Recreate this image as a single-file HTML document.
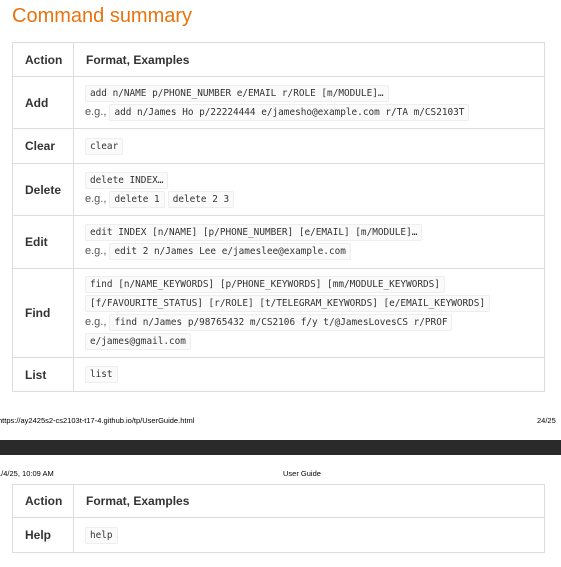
<!DOCTYPE html>
<html><head><style>
*{margin:0;padding:0;box-sizing:border-box}
body{width:561px;height:567px;background:#fff;position:relative;overflow:hidden;font-family:"Liberation Sans",sans-serif;color:#333}
h1{position:absolute;left:12px;top:5px;font-size:20px;font-weight:normal;color:#e8730f;font-family:"Liberation Sans",sans-serif}
table{position:absolute;left:12px;width:533px;border-collapse:collapse;font-size:12px;table-layout:fixed}
td{border:1px solid #ddd;vertical-align:middle;padding:0 12px}
td.a{font-weight:bold;color:#333}
th{border:1px solid #ddd;text-align:left;font-weight:bold;padding:0 12px;font-size:12px}
code{font-family:"DejaVu Sans Mono","Liberation Mono",monospace;font-size:9.4px;background:#fafafa;border:1px solid #eee;border-radius:2px;padding:2px 4px;color:#333;white-space:nowrap}
.l{line-height:19px;font-size:11px;color:#555;padding-left:11px}
.foot{position:absolute;font-size:7.5px;color:#000;font-family:"Liberation Sans",sans-serif}
.band{position:absolute;left:0;top:440px;width:561px;height:15px;background:#2a2a2a}
</style></head><body>
<h1>Command summary</h1>
<table style="top:42px">
<colgroup><col style="width:61px"><col></colgroup>
<tr style="height:34px"><th>Action</th><th>Format, Examples</th></tr>
<tr style="height:52px"><td class="a">Add</td><td class="l"><code>add n/NAME p/PHONE_NUMBER e/EMAIL r/ROLE [m/MODULE]…</code><br>e.g., <code>add n/James Ho p/22224444 e/jamesho@example.com r/TA m/CS2103T</code></td></tr>
<tr style="height:35px"><td class="a">Clear</td><td class="l"><code>clear</code></td></tr>
<tr style="height:52px"><td class="a">Delete</td><td class="l"><code>delete INDEX…</code><br>e.g., <code>delete 1</code> <code>delete 2 3</code></td></tr>
<tr style="height:53px"><td class="a">Edit</td><td class="l"><code>edit INDEX [n/NAME] [p/PHONE_NUMBER] [e/EMAIL] [m/MODULE]…</code><br>e.g., <code>edit 2 n/James Lee e/jameslee@example.com</code></td></tr>
<tr style="height:89px"><td class="a">Find</td><td class="l"><code>find [n/NAME_KEYWORDS] [p/PHONE_KEYWORDS] [mm/MODULE_KEYWORDS]</code><br><code>[f/FAVOURITE_STATUS] [r/ROLE] [t/TELEGRAM_KEYWORDS] [e/EMAIL_KEYWORDS]</code><br>e.g., <code>find n/James p/98765432 m/CS2106 f/y t/@JamesLovesCS r/PROF</code><br><code>e/james@gmail.com</code></td></tr>
<tr style="height:34px"><td class="a">List</td><td class="l"><code>list</code></td></tr>
</table>
<div class="foot" style="left:-2px;top:416px">https://ay2425s2-cs2103t-t17-4.github.io/tp/UserGuide.html</div>
<div class="foot" style="left:537px;top:416px">24/25</div>
<div class="band"></div>
<div class="foot" style="left:-3px;top:469px">1/4/25, 10:09 AM</div>
<div class="foot" style="left:283px;top:469px">User Guide</div>
<table style="top:484px">
<colgroup><col style="width:61px"><col></colgroup>
<tr style="height:33px"><th>Action</th><th>Format, Examples</th></tr>
<tr style="height:35px"><td class="a">Help</td><td class="l"><code>help</code></td></tr>
</table>
</body></html>
